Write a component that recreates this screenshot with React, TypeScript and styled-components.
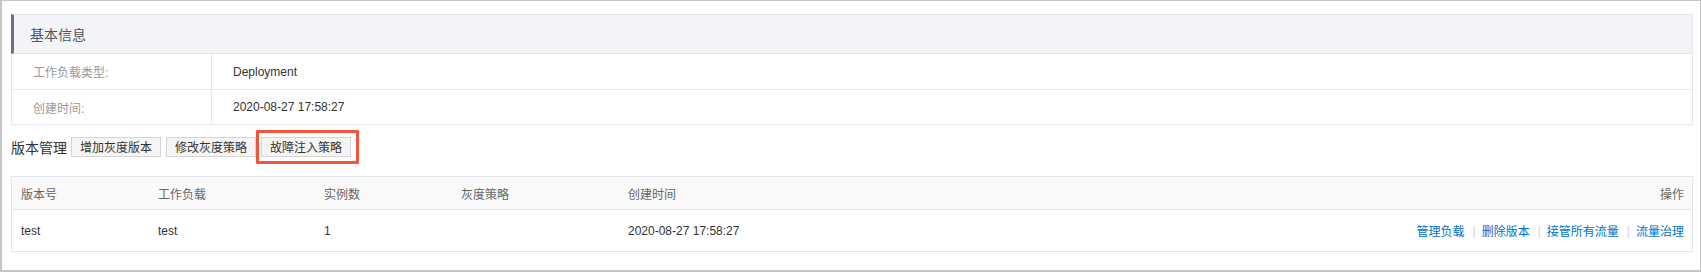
import * as React from "react"
import styled, { createGlobalStyle } from "styled-components"

const FONT = `"Liberation Sans", "Noto Sans CJK SC", Arial, sans-serif`

const GlobalStyle = createGlobalStyle`
  html, body {
    margin: 0;
    padding: 0;
    background: #fff;
  }
  body {
    font-family: ${FONT};
    font-size: 12px;
    color: #333;
  }
  * {
    box-sizing: border-box;
  }
`

const Frame = styled.div`
  width: 1701px;
  height: 272px;
  border: 1px solid #c6c6c6;
  border-left-width: 2px;
  border-bottom-width: 2px;
  padding: 13px 7px 0 9px;
  background: #fff;
`

// 基本信息
const InfoPanel = styled.div`
  border: 1px solid #e3e6eb;
  border-top: none;
`

const InfoHeader = styled.div`
  display: flex;
  align-items: center;
  height: 40px;
  padding-left: 16px;
  background: #f3f4f8;
  border-top: 1px solid #e3e6eb;
  border-bottom: 1px solid #e0e3e8;
  border-left: 3px solid #6f6f7d;
  margin-left: -1px;
  font-size: 14px;
  color: #555;
`

const InfoRow = styled.div`
  display: grid;
  grid-template-columns: 200px 1fr;
  height: 35px;
  & + & {
    border-top: 1px solid #e8e8e8;
  }
`

const InfoLabel = styled.div`
  display: flex;
  align-items: center;
  padding-left: 21px;
  color: #999;
  border-right: 1px solid #e8e8e8;
`

const InfoValue = styled.div`
  display: flex;
  align-items: center;
  padding-left: 21px;
  color: #333;
`

// 版本管理
const Toolbar = styled.div`
  display: flex;
  align-items: center;
  gap: 5px;
  margin-top: 11px;
  height: 21px;
`

const ToolbarTitle = styled.span`
  font-size: 14px;
  color: #333;
  margin-right: -1px;
`

const Button = styled.button`
  height: 20px;
  padding: 0 8px;
  font-family: ${FONT};
  font-size: 12px;
  color: #333;
  background: #f5f5f5;
  border: 1px solid #d4d4d4;
  border-radius: 0;
  cursor: pointer;
`

const Highlight = styled.span`
  position: relative;
  display: inline-flex;

  &::after {
    content: "";
    position: absolute;
    left: -5px;
    top: -7px;
    right: -8px;
    bottom: -7px;
    border: 3px solid #f0563a;
    border-radius: 1px;
    pointer-events: none;
  }
`

const Table = styled.div`
  margin-top: 19px;
  border: 1px solid #e1e6eb;
`

const TableRow = styled.div<{ $head?: boolean }>`
  display: grid;
  grid-template-columns: 137px 166px 137px 167px 1fr auto;
  align-items: center;
  height: ${p => (p.$head ? "33px" : "41px")};
  padding: 0 8px 0 9px;
  background: ${p => (p.$head ? "#f9f9f9" : "#fff")};
  color: ${p => (p.$head ? "#666" : "#333")};
  ${p => (p.$head ? "border-bottom: 1px solid #e1e6eb;" : "")}
`

const Actions = styled.div`
  display: flex;
  align-items: center;
  justify-content: flex-end;
`

const Link = styled.a`
  color: #0070cc;
  text-decoration: none;
  cursor: pointer;
`

const Sep = styled.span`
  color: #d0d0d0;
  margin: 0 6px 0 8px;
`

const links = ["管理负载", "删除版本", "接管所有流量", "流量治理"]

export default function App() {
  return (
    <>
      <GlobalStyle />
      <Frame>
        <InfoPanel>
          <InfoHeader>基本信息</InfoHeader>
          <InfoRow>
            <InfoLabel>工作负载类型:</InfoLabel>
            <InfoValue>Deployment</InfoValue>
          </InfoRow>
          <InfoRow>
            <InfoLabel>创建时间:</InfoLabel>
            <InfoValue>2020-08-27 17:58:27</InfoValue>
          </InfoRow>
        </InfoPanel>

        <Toolbar>
          <ToolbarTitle>版本管理</ToolbarTitle>
          <Button>增加灰度版本</Button>
          <Button>修改灰度策略</Button>
          <Highlight>
            <Button>故障注入策略</Button>
          </Highlight>
        </Toolbar>

        <Table>
          <TableRow $head>
            <div>版本号</div>
            <div>工作负载</div>
            <div>实例数</div>
            <div>灰度策略</div>
            <div>创建时间</div>
            <div>操作</div>
          </TableRow>
          <TableRow>
            <div>test</div>
            <div>test</div>
            <div>1</div>
            <div></div>
            <div>2020-08-27 17:58:27</div>
            <Actions>
              {links.map((l, i) => (
                <React.Fragment key={l}>
                  {i > 0 && <Sep>|</Sep>}
                  <Link>{l}</Link>
                </React.Fragment>
              ))}
            </Actions>
          </TableRow>
        </Table>
      </Frame>
    </>
  )
}
